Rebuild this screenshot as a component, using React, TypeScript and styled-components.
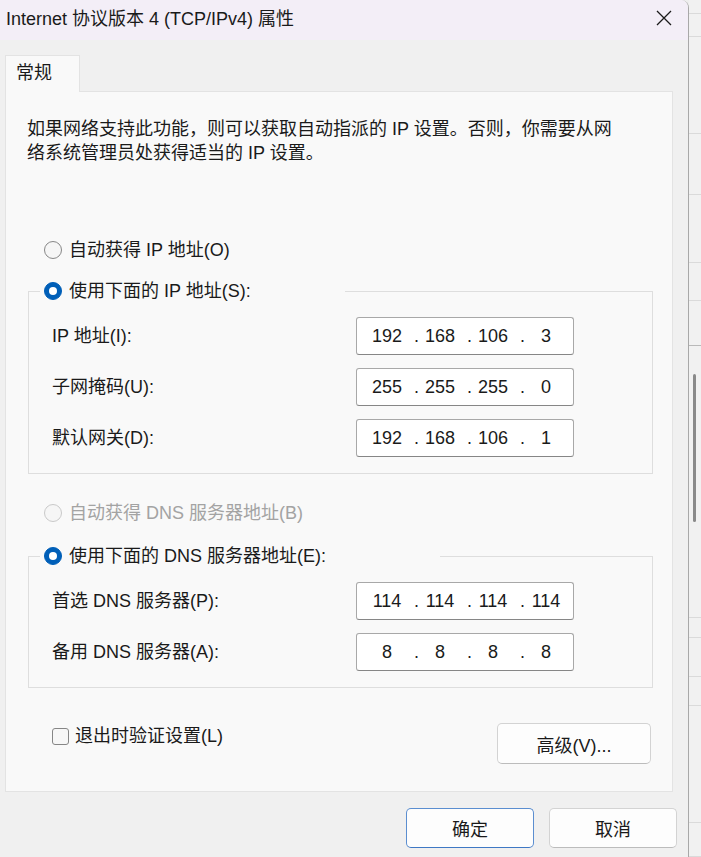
import React from 'react';
import styled, { createGlobalStyle } from 'styled-components';

const GlobalStyle = createGlobalStyle`
  html, body {
    margin: 0;
    padding: 0;
  }
  body {
    background: #eeeeee;
    font-family: "Liberation Sans", "Noto Sans CJK SC", sans-serif;
    color: #1a1a1a;
    overflow: hidden;
  }
`;

const Screen = styled.div`
  display: flex;
  width: 701px;
  height: 857px;
  overflow: hidden;
`;

const Dialog = styled.div`
  width: 689px;
  flex-shrink: 0;
  box-sizing: border-box;
  display: flex;
  flex-direction: column;
  background: #f0f0f0;
  border-right: 1px solid #a8a8a8;
  border-top-right-radius: 8px;
  overflow: hidden;
`;

const TitleBar = styled.div`
  height: 40px;
  display: flex;
  justify-content: space-between;
  align-items: flex-start;
  background: #f3eef7;
`;

const Title = styled.div`
  padding: 7px 0 0 6px;
  font-size: 18px;
  line-height: 24px;
  color: #1a1a1a;
`;

const CloseButton = styled.button`
  width: 48px;
  height: 35px;
  display: flex;
  align-items: center;
  justify-content: center;
  padding: 0;
  border: none;
  background: transparent;
`;

const Body = styled.div`
  display: flex;
  flex-direction: column;
  padding: 15px 11px 0 5px;
`;

const TabStrip = styled.div`
  display: flex;
`;

const Tab = styled.div`
  position: relative;
  z-index: 1;
  width: 75px;
  height: 37px;
  box-sizing: border-box;
  margin-bottom: -1px;
  padding-left: 10px;
  border: 1px solid #e3e3e3;
  border-bottom: none;
  background: #f9f9f9;
  font-size: 18px;
  line-height: 34px;
`;

const Panel = styled.div`
  height: 701px;
  box-sizing: border-box;
  margin-right: 4px;
  padding: 25px 19px 0 22px;
  display: flex;
  flex-direction: column;
  background: #f9f9f9;
  border: 1px solid #e3e3e3;
`;

const Description = styled.p`
  margin: 0 0 0 -1px;
  font-size: 18px;
  line-height: 24px;
`;

const RadioRow = styled.label<{ $disabled?: boolean; $gap?: number }>`
  display: flex;
  align-items: center;
  gap: 7px;
  height: 24px;
  margin-top: ${(p) => p.$gap ?? 0}px;
  margin-left: 16px;
  font-size: 18px;
  line-height: 24px;
  white-space: nowrap;
  color: ${(p) => (p.$disabled ? '#a3a3a3' : '#1a1a1a')};
`;

const RadioMark = styled.span<{ $checked?: boolean; $disabled?: boolean }>`
  width: 18px;
  height: 18px;
  box-sizing: border-box;
  flex-shrink: 0;
  display: flex;
  align-items: center;
  justify-content: center;
  border-radius: 50%;
  border: 1px solid
    ${(p) => (p.$checked ? '#005fb8' : p.$disabled ? '#c9c9c9' : '#878787')};
  background: ${(p) => (p.$checked ? '#005fb8' : '#f6f6f6')};

  &::after {
    content: '';
    display: ${(p) => (p.$checked ? 'block' : 'none')};
    width: 8px;
    height: 8px;
    border-radius: 50%;
    background: #ffffff;
  }
`;

const GroupBox = styled.fieldset<{ $gap: number }>`
  width: 625px;
  box-sizing: border-box;
  min-width: 0;
  margin: ${(p) => p.$gap}px 0 0;
  padding: 0;
  border: 1px solid #dedede;
`;

const GroupLegend = styled.legend<{ $width: number }>`
  width: ${(p) => p.$width}px;
  box-sizing: border-box;
  margin-left: 11px;
  padding: 0 0 0 4px;

  & > ${RadioRow} {
    margin-left: 0;
  }
`;

const FieldGrid = styled.div`
  display: grid;
  grid-template-columns: 304px 218px;
  row-gap: 13px;
  align-items: center;
  padding: 14px 0 16px 23px;
`;

const FieldLabel = styled.span`
  font-size: 18px;
  line-height: 24px;
  white-space: nowrap;
`;

const IpBox = styled.div`
  height: 38px;
  box-sizing: border-box;
  display: grid;
  grid-template-columns: 30px 23px 30px 23px 30px 23px 30px;
  align-items: center;
  padding-left: 15px;
  background: #ffffff;
  border: 1px solid #a8a8a8;
  border-bottom-color: #868686;
  border-radius: 3px;
  font-size: 18px;
  line-height: 24px;
`;

const IpPart = styled.span`
  text-align: center;
`;

const IpDot = styled.span`
  padding-left: 6px;
  text-align: center;
`;

const Footer = styled.div`
  display: flex;
  justify-content: space-between;
  align-items: flex-start;
  margin-top: 35px;
  padding: 0 2px 0 24px;
`;

const CheckRow = styled.label`
  display: flex;
  align-items: center;
  gap: 6px;
  height: 24px;
  margin-top: 1px;
  font-size: 18px;
  line-height: 24px;
`;

const CheckMark = styled.span`
  width: 17px;
  height: 17px;
  box-sizing: border-box;
  border: 1px solid #868686;
  border-radius: 3px;
  background: #f7f7f7;
`;

const Button = styled.button<{ $width: number; $height: number; $primary?: boolean }>`
  width: ${(p) => p.$width}px;
  height: ${(p) => p.$height}px;
  padding: 0;
  background: #fdfdfd;
  border: 1px solid ${(p) => (p.$primary ? '#5b8ed0' : '#d3d3d3')};
  border-bottom-color: ${(p) => (p.$primary ? '#3f78c4' : '#bcbcbc')};
  border-radius: 5px;
  font-family: inherit;
  font-size: 18px;
  color: #1a1a1a;
`;

const DialogButtons = styled.div`
  display: flex;
  justify-content: flex-end;
  gap: 15px;
  margin-top: 16px;
`;

const BackWindow = styled.div`
  flex: 1;
  display: flex;
  flex-direction: column;
  background: #f1f1f1;
`;

const BackRow = styled.div<{ $height?: number; $dark?: boolean }>`
  height: ${(p) => (p.$height ? `${p.$height}px` : 'auto')};
  flex: ${(p) => (p.$height ? 'none' : 1)};
  box-sizing: border-box;
  border-bottom: 1px solid ${(p) => (p.$dark ? '#b9b9b9' : '#dadada')};
`;

const ScrollThumb = styled.div`
  width: 3px;
  height: 148px;
  margin: 28px 0 0 4px;
  border-radius: 2px;
  background: #8a8a8a;
`;

type IpProps = { parts: string[] };

const IpField = ({ parts }: IpProps) => (
  <IpBox>
    {parts.map((part, i) => (
      <React.Fragment key={i}>
        {i > 0 && <IpDot>.</IpDot>}
        <IpPart>{part}</IpPart>
      </React.Fragment>
    ))}
  </IpBox>
);

const backRows = [14, 23, 97, 61, 68, 38];

export default function App() {
  return (
    <>
      <GlobalStyle />
      <Screen>
        <Dialog>
          <TitleBar>
            <Title>Internet 协议版本 4 (TCP/IPv4) 属性</Title>
            <CloseButton aria-label="关闭">
              <svg width="16" height="16" viewBox="0 0 16 16">
                <path d="M1 1 L15 15 M15 1 L1 15" stroke="#1a1a1a" strokeWidth="1.3" fill="none" />
              </svg>
            </CloseButton>
          </TitleBar>

          <Body>
            <TabStrip>
              <Tab>常规</Tab>
            </TabStrip>
            <Panel>
              <Description>
                如果网络支持此功能，则可以获取自动指派的 IP 设置。否则，你需要从网
                <br />
                络系统管理员处获得适当的 IP 设置。
              </Description>

              <RadioRow $gap={73}>
                <RadioMark />
                自动获得 IP 地址(O)
              </RadioRow>

              <GroupBox $gap={17}>
                <GroupLegend $width={305}>
                  <RadioRow>
                    <RadioMark $checked />
                    使用下面的 IP 地址(S):
                  </RadioRow>
                </GroupLegend>
                <FieldGrid>
                  <FieldLabel>IP 地址(I):</FieldLabel>
                  <IpField parts={['192', '168', '106', '3']} />
                  <FieldLabel>子网掩码(U):</FieldLabel>
                  <IpField parts={['255', '255', '255', '0']} />
                  <FieldLabel>默认网关(D):</FieldLabel>
                  <IpField parts={['192', '168', '106', '1']} />
                </FieldGrid>
              </GroupBox>

              <RadioRow $gap={27} $disabled>
                <RadioMark $disabled />
                自动获得 DNS 服务器地址(B)
              </RadioRow>

              <GroupBox $gap={19}>
                <GroupLegend $width={400}>
                  <RadioRow>
                    <RadioMark $checked />
                    使用下面的 DNS 服务器地址(E):
                  </RadioRow>
                </GroupLegend>
                <FieldGrid>
                  <FieldLabel>首选 DNS 服务器(P):</FieldLabel>
                  <IpField parts={['114', '114', '114', '114']} />
                  <FieldLabel>备用 DNS 服务器(A):</FieldLabel>
                  <IpField parts={['8', '8', '8', '8']} />
                </FieldGrid>
              </GroupBox>

              <Footer>
                <CheckRow>
                  <CheckMark />
                  退出时验证设置(L)
                </CheckRow>
                <Button $width={154} $height={41}>
                  高级(V)...
                </Button>
              </Footer>
            </Panel>

            <DialogButtons>
              <Button $width={128} $height={40} $primary>
                确定
              </Button>
              <Button $width={128} $height={40}>
                取消
              </Button>
            </DialogButtons>
          </Body>
        </Dialog>

        <BackWindow>
          {backRows.map((h, i) => (
            <BackRow key={i} $height={h} />
          ))}
          <BackRow $height={45} $dark />
          <BackRow $height={272}>
            <ScrollThumb />
          </BackRow>
          <BackRow $height={20} />
          <BackRow $height={39} />
          <BackRow $height={29} />
          <BackRow $height={117} />
          <BackRow />
        </BackWindow>
      </Screen>
    </>
  );
}
